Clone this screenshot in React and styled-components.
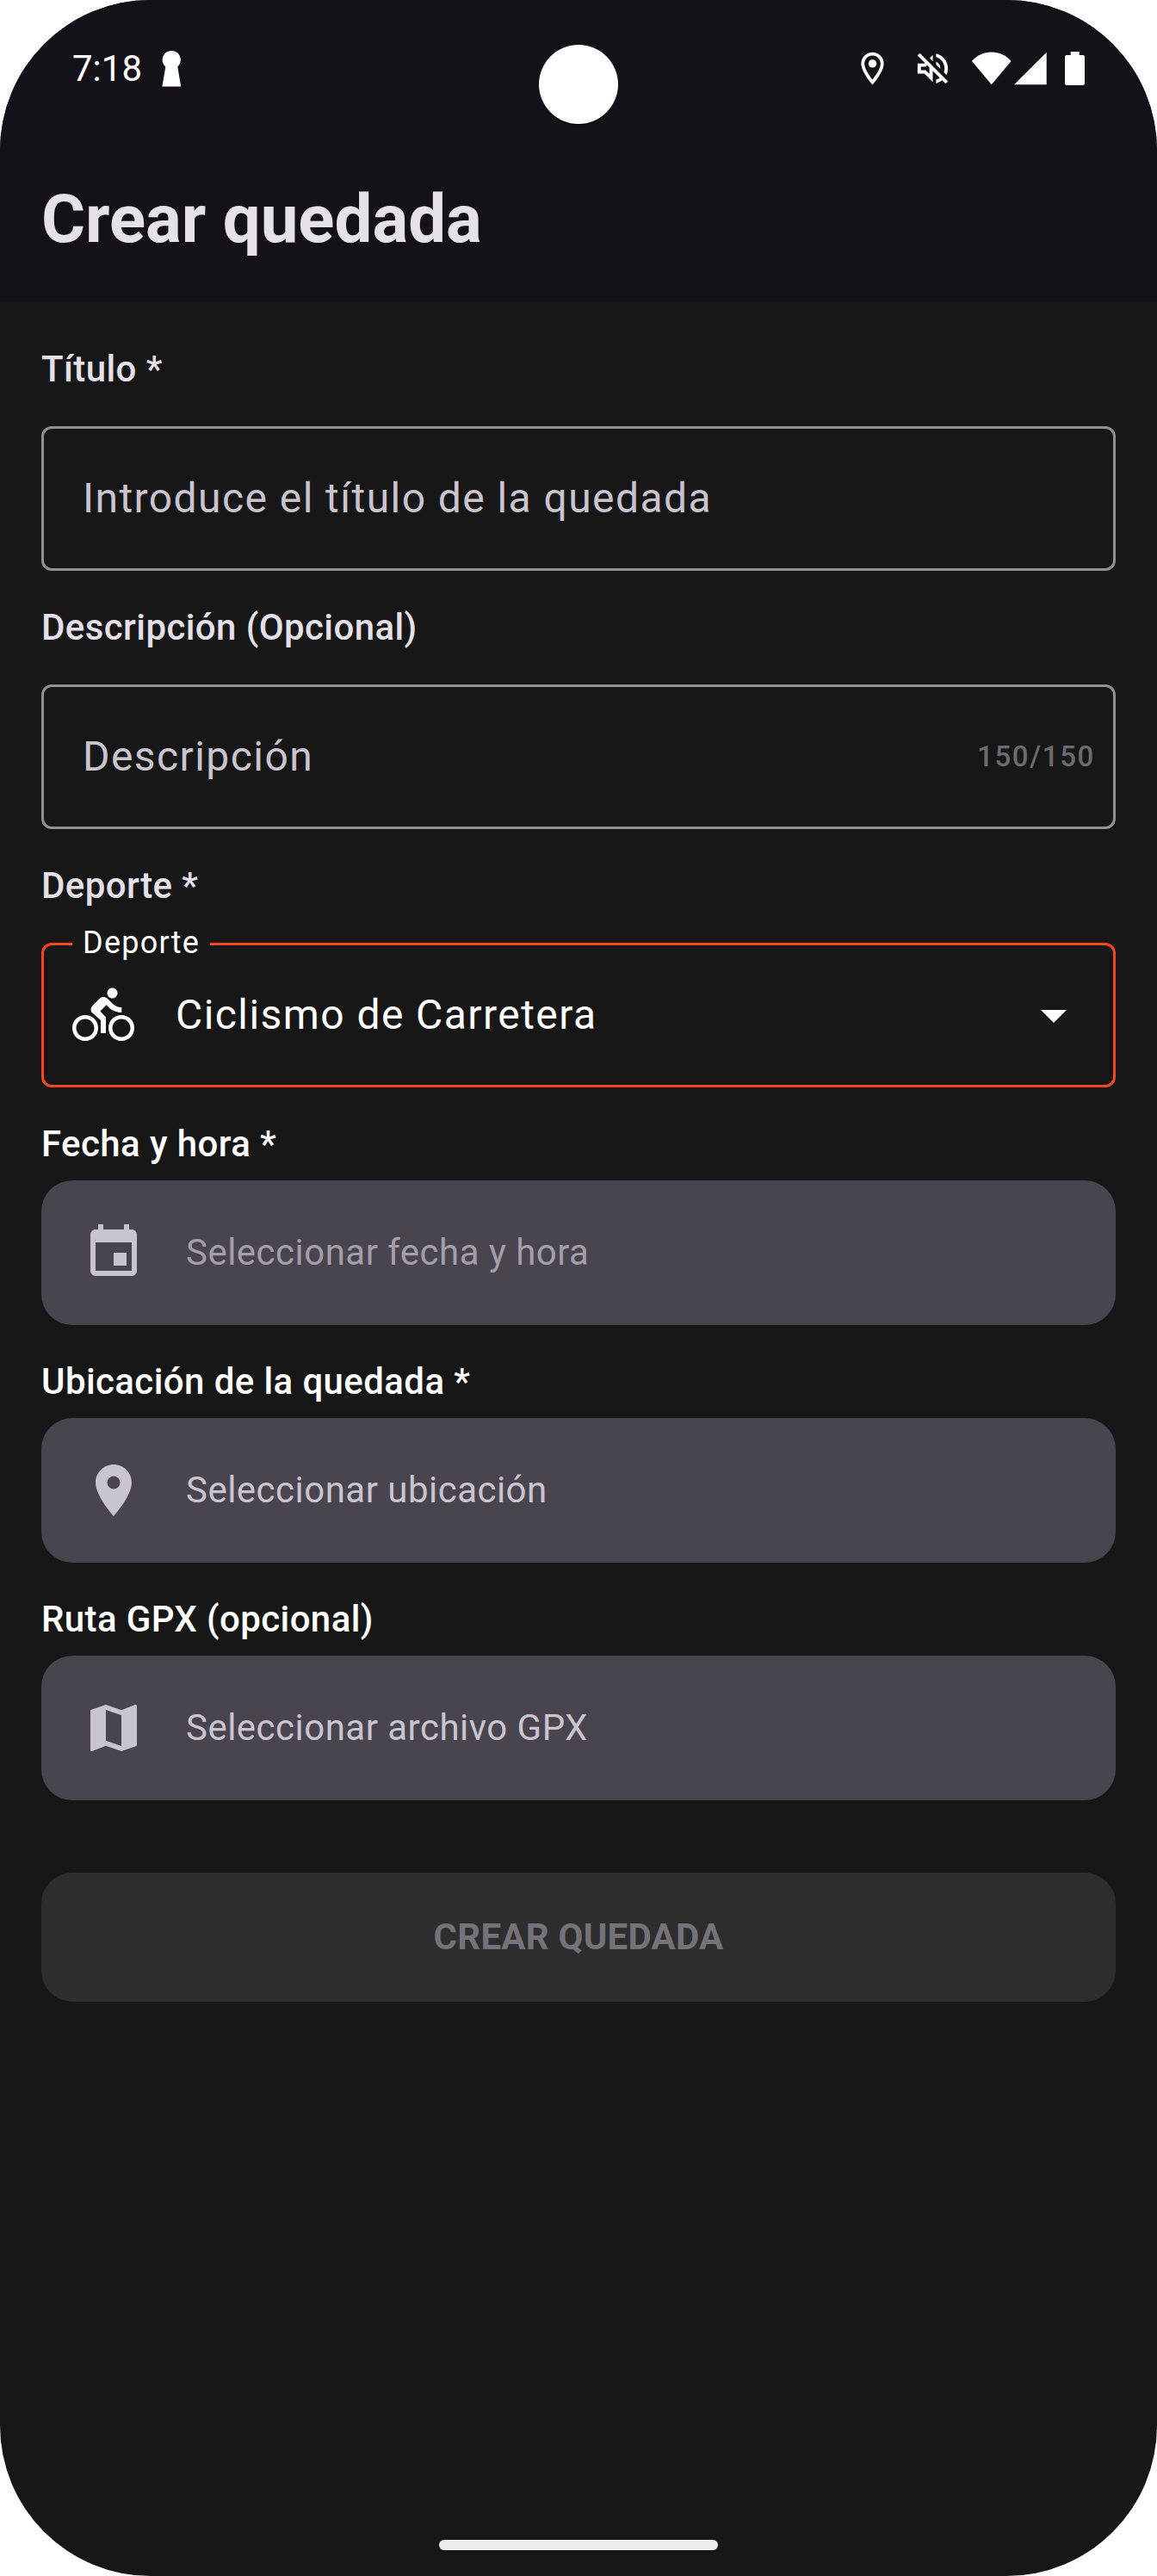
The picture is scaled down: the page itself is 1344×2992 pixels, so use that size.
import React from "react";
import styled, { createGlobalStyle } from "styled-components";
import {
  MdOutlineLocationOn,
  MdOutlineVolumeOff,
  MdDirectionsBike,
  MdArrowDropDown,
  MdEvent,
  MdLocationOn,
  MdMap,
} from "react-icons/md";

const GlobalStyle = createGlobalStyle`
  *, *::before, *::after { box-sizing: border-box; }
  body { margin: 0; background: #ffffff; }
`;

const Screen = styled.div`
  position: relative;
  display: flex;
  flex-direction: column;
  width: 1344px;
  height: 2992px;
  overflow: hidden;
  border-radius: 175px;
  background: #171717;
  color: #ffffff;
  font-family: Roboto, "Liberation Sans", sans-serif;
`;

const Header = styled.header`
  height: 351px;
  background: #141218;
`;

const StatusBar = styled.div`
  display: flex;
  align-items: center;
  justify-content: space-between;
  height: 159px;
  padding: 0 84px;
`;

const StatusGroup = styled.div`
  display: flex;
  align-items: center;
`;

const Clock = styled.span`
  width: 104px;
  font-size: 42px;
  line-height: 50px;
`;

const StatusIcon = styled.span`
  display: flex;
  margin-left: ${(p) => p.$gap || 0}px;

  svg {
    display: block;
  }
`;

const Camera = styled.div`
  position: absolute;
  top: 52px;
  left: 626px;
  width: 92px;
  height: 92px;
  border-radius: 50%;
  background: #ffffff;
  box-shadow: 0 1px 0 #000000;
`;

const AppBar = styled.div`
  display: flex;
  align-items: center;
  height: 192px;
  padding: 0 48px;
`;

const Title = styled.h1`
  margin: 0;
  font-size: 78px;
  line-height: 96px;
  font-weight: 700;
  color: #e6e0e9;
`;

const Form = styled.main`
  display: flex;
  flex-direction: column;
  flex: 1;
  padding: 48px 48px 0;
`;

const Field = styled.section`
  display: flex;
  flex-direction: column;
  gap: ${(p) => p.$gap}px;
  margin-bottom: 36px;
`;

const Label = styled.label`
  font-size: 42px;
  line-height: 60px;
  font-weight: 500;
  letter-spacing: 0.4px;
  color: ${(p) => (p.$bright ? "#ffffff" : "#e6e0e9")};
`;

const Outlined = styled.div`
  position: relative;
  display: flex;
  align-items: center;
  height: 168px;
  padding: 0 21px 0 ${(p) => (p.$active ? 33 : 45)}px;
  border: 3px solid ${(p) => (p.$active ? "#f4471f" : "#938f99")};
  border-radius: 12px;
`;

const FieldText = styled.span`
  flex: 1;
  margin-left: ${(p) => (p.$indent ? 48 : 0)}px;
  font-size: 48px;
  line-height: 72px;
  letter-spacing: 1.43px;
  color: ${(p) => (p.$filled ? "#ffffff" : "#cac4d0")};
`;

const Counter = styled.span`
  font-size: 33px;
  line-height: 48px;
  font-weight: 500;
  letter-spacing: 1.65px;
  color: #6c6b6f;
`;

const FloatingLabel = styled.span`
  position: absolute;
  top: -27px;
  left: 33px;
  padding: 0 12px;
  font-size: 36px;
  line-height: 48px;
  letter-spacing: 1.25px;
  background: #171717;
`;

const Chevron = styled.span`
  display: flex;
  margin-right: 12px;
`;

const PickerButton = styled.button`
  display: flex;
  align-items: center;
  gap: 48px;
  height: 168px;
  padding: 0 48px;
  border: 0;
  border-radius: 36px;
  background: #49454f;
  color: #cac4d0;
  font-family: inherit;
  text-align: left;
`;

const PickerText = styled.span`
  font-size: 42px;
  line-height: 60px;
  letter-spacing: 0.48px;
  color: ${(p) => (p.$dim ? "#a39eaa" : "#cac4d0")};
`;

const SubmitButton = styled.button`
  height: 150px;
  margin-top: 48px;
  padding: 0;
  border: 0;
  border-radius: 36px;
  background: #2e2e2e;
  color: #757279;
  font-family: inherit;
  font-size: 42px;
  line-height: 60px;
  font-weight: 700;
  letter-spacing: 0.22px;
`;

const HomeBar = styled.div`
  align-self: center;
  width: 324px;
  height: 12px;
  margin-bottom: 30px;
  border-radius: 6px;
  background: #ececec;
`;

const KeyholeIcon = () => (
  <svg width="23" height="42" viewBox="0 0 23 42" fill="#fff">
    <path d="M11.2 0C5.200 0 .6 4.700 .6 10.500c0 3.200 1.400 6 3.700 7.900L.4 41.400h21.800l-3.900-23c2.200-1.900 3.600-4.700 3.600-7.900C21.900 4.700 17.200 0 11.200 0z" />
  </svg>
);

const WifiIcon = () => (
  <svg width="46" height="39" viewBox="0 0 46 39" fill="#fff">
    <path d="M0 11C6 4 14 .5 22.8 .5S39.600 4 45.500 11L22.800 38.300z" />
  </svg>
);

const SignalIcon = () => (
  <svg width="38" height="39" viewBox="0 0 38 39" fill="#fff">
    <path d="M0 38.3H37.7V.8z" />
  </svg>
);

const BatteryIcon = () => (
  <svg width="23" height="39" viewBox="0 0 23 39" fill="#fff">
    <path d="M6.7 0h10v4H21a2 2 0 0 1 2 2v31a2 2 0 0 1-2 2H2a2 2 0 0 1-2-2V6a2 2 0 0 1 2-2h4.700z" />
  </svg>
);

const pickers = [
  { label: "Fecha y hora *", text: "Seleccionar fecha y hora", Icon: MdEvent, dim: true },
  { label: "Ubicación de la quedada *", text: "Seleccionar ubicación", Icon: MdLocationOn },
  { label: "Ruta GPX (opcional)", text: "Seleccionar archivo GPX", Icon: MdMap },
];

export default function App() {
  return (
    <>
      <GlobalStyle />
      <Screen>
        <Header>
          <StatusBar>
            <StatusGroup>
              <Clock>7:18</Clock>
              <StatusIcon>
                <KeyholeIcon />
              </StatusIcon>
            </StatusGroup>
            <StatusGroup>
              <StatusIcon>
                <MdOutlineLocationOn size={45} />
              </StatusIcon>
              <StatusIcon $gap={24}>
                <MdOutlineVolumeOff size={47} />
              </StatusIcon>
              <StatusIcon $gap={22}>
                <WifiIcon />
              </StatusIcon>
              <StatusIcon $gap={3}>
                <SignalIcon />
              </StatusIcon>
              <StatusIcon $gap={21}>
                <BatteryIcon />
              </StatusIcon>
            </StatusGroup>
          </StatusBar>
          <AppBar>
            <Title>Crear quedada</Title>
          </AppBar>
        </Header>
        <Camera />
        <Form>
          <Field $gap={36}>
            <Label>Título *</Label>
            <Outlined>
              <FieldText>Introduce el título de la quedada</FieldText>
            </Outlined>
          </Field>
          <Field $gap={36}>
            <Label>Descripción (Opcional)</Label>
            <Outlined>
              <FieldText>Descripción</FieldText>
              <Counter>150/150</Counter>
            </Outlined>
          </Field>
          <Field $gap={36}>
            <Label>Deporte *</Label>
            <Outlined $active>
              <FloatingLabel>Deporte</FloatingLabel>
              <MdDirectionsBike size={72} />
              <FieldText $filled $indent>
                Ciclismo de Carretera
              </FieldText>
              <Chevron>
                <MdArrowDropDown size={72} />
              </Chevron>
            </Outlined>
          </Field>
          {pickers.map(({ label, text, Icon, dim }) => (
            <Field key={label} $gap={12}>
              <Label $bright>{label}</Label>
              <PickerButton>
                <Icon size={72} />
                <PickerText $dim={dim}>{text}</PickerText>
              </PickerButton>
            </Field>
          ))}
          <SubmitButton>CREAR QUEDADA</SubmitButton>
        </Form>
        <HomeBar />
      </Screen>
    </>
  );
}
